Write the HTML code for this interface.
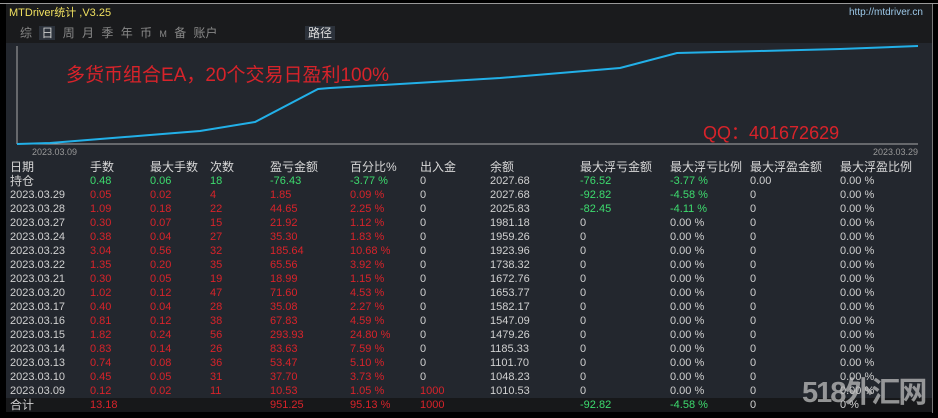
<!DOCTYPE html>
<html><head><meta charset="utf-8"><style>
body{margin:0;width:938px;height:418px;background:#000;overflow:hidden;font-family:"Liberation Sans","Noto Sans CJK SC",sans-serif;position:relative}
.p{position:absolute}
#top{left:6px;top:3px;width:926px;height:40px;background:#1a1b1d}
#chart{left:6px;top:43px;width:926px;height:117px;background:#23272e}
#tbl{left:6px;top:160px;width:926px;height:238px;background:#23272e}
#sum{left:6px;top:398px;width:926px;height:14px;background:#17181a}
.t{position:absolute;font-size:11px;white-space:nowrap;line-height:14px}
.h{font-size:12px;color:#d8d8d8}
.w{color:#d0d0d0}.r{color:#d8232a}.g{color:#3ddc6e}
</style></head><body>
<div class="p" id="top"></div>
<div class="p" id="chart"></div>
<div class="p" id="tbl"></div>
<div class="p" id="sum"></div>
<div class="p" style="left:932px;top:3px;width:1px;height:410px;background:#777"></div>
<div class="p" style="left:0;top:3px;width:938px;height:1px;background:#999"></div>
<div class="t" style="left:9px;top:6px;font-size:11px;color:#f0e060">MTDriver统计 ,V3.25</div>
<div class="t" style="left:849px;top:6px;font-size:10px;color:#9cc8e8">http://mtdriver.cn</div>
<div class="t" style="left:20px;top:26px;font-size:12px;color:#888;word-spacing:4px">综 <span style="background:#2c323b;color:#ccc;padding:0 2px">日</span> 周 月 季 年 币 <span style="font-size:9px">M</span> 备 账户</div>
<div class="t" style="left:305px;top:26px;font-size:12px;color:#ddd;background:#2c323b;padding:0 3px">路径</div>
<svg class="p" style="left:0;top:0" width="938" height="160">
<line x1="17" y1="46" x2="17" y2="144" stroke="#aaa" stroke-width="1"/>
<line x1="17" y1="144" x2="918" y2="144" stroke="#aaa" stroke-width="1"/>
<polyline fill="none" stroke="#22b0e8" stroke-width="2" points="17,144 50,143 100,139 150,135 200,131 255,122 318,89 330,88 400,84 500,78 620,68 677,53 760,51 840,49 918,46"/>
</svg>
<div class="t" style="left:32px;top:145px;font-size:9px;color:#999">2023.03.09</div>
<div class="t" style="left:873px;top:145px;font-size:9px;color:#999">2023.03.29</div>
<div class="t" style="left:66px;top:64px;font-size:19px;line-height:24px;color:#d8232a">多货币组合EA，20个交易日盈利100%</div>
<div class="t" style="left:703px;top:122px;font-size:18px;line-height:22px;color:#d8232a">QQ：401672629</div>
<div id="rows"></div>
<div class="t" style="left:802px;top:375px;font-size:29px;line-height:36px;letter-spacing:-2px;color:rgba(190,190,190,0.75);font-weight:bold">518外汇网</div>
<script>
var X=[10,90,150,210,270,350,420,490,580,670,750,840];
var H=["日期","手数","最大手数","次数","盈亏金额","百分比%","出入金","余额","最大浮亏金额","最大浮亏比例","最大浮盈金额","最大浮盈比例"];
var s="";
H.forEach(function(h,i){s+='<div class="t h" style="left:'+X[i]+'px;top:160px">'+h+'</div>';});
var R=[["持仓","0.48","0.06","18","-76.43","-3.77 %","0","2027.68","-76.52","-3.77 %","0.00","0.00 %"],
["2023.03.29","0.05","0.02","4","1.85","0.09 %","0","2027.68","-92.82","-4.58 %","0","0.00 %"],
["2023.03.28","1.09","0.18","22","44.65","2.25 %","0","2025.83","-82.45","-4.11 %","0","0.00 %"],
["2023.03.27","0.30","0.07","15","21.92","1.12 %","0","1981.18","0","0.00 %","0","0.00 %"],
["2023.03.24","0.38","0.04","27","35.30","1.83 %","0","1959.26","0","0.00 %","0","0.00 %"],
["2023.03.23","3.04","0.56","32","185.64","10.68 %","0","1923.96","0","0.00 %","0","0.00 %"],
["2023.03.22","1.35","0.20","35","65.56","3.92 %","0","1738.32","0","0.00 %","0","0.00 %"],
["2023.03.21","0.30","0.05","19","18.99","1.15 %","0","1672.76","0","0.00 %","0","0.00 %"],
["2023.03.20","1.02","0.12","47","71.60","4.53 %","0","1653.77","0","0.00 %","0","0.00 %"],
["2023.03.17","0.40","0.04","28","35.08","2.27 %","0","1582.17","0","0.00 %","0","0.00 %"],
["2023.03.16","0.81","0.12","38","67.83","4.59 %","0","1547.09","0","0.00 %","0","0.00 %"],
["2023.03.15","1.82","0.24","56","293.93","24.80 %","0","1479.26","0","0.00 %","0","0.00 %"],
["2023.03.14","0.83","0.14","26","83.63","7.59 %","0","1185.33","0","0.00 %","0","0.00 %"],
["2023.03.13","0.74","0.08","36","53.47","5.10 %","0","1101.70","0","0.00 %","0","0.00 %"],
["2023.03.10","0.45","0.05","31","37.70","3.73 %","0","1048.23","0","0.00 %","0","0.00 %"],
["2023.03.09","0.12","0.02","11","10.53","1.05 %","1000","1010.53","0","0.00 %","0","0.00 %"],
["合计","13.18","","","951.25","95.13 %","1000","","-92.82","-4.58 %","0","0 %"]];
R.forEach(function(r,j){var y=174+j*14;if(j==16)y=398;
r.forEach(function(v,i){var c="w";
if(j==0){if(i>=1&&i<=5)c="g";if(i==0)c="h w";if(v.charAt(0)=="-")c="g";}
else{if(i>=1&&i<=5)c="r";if(j==16&&i==6)c="r";if(j==15&&i==6)c="r";if(v.charAt(0)=="-")c="g";if(j==16&&i==0)c="h w";}
s+='<div class="t '+c+'" style="left:'+X[i]+'px;top:'+y+'px">'+v+'</div>';});});
document.getElementById("rows").innerHTML=s;
</script>
</body></html>
